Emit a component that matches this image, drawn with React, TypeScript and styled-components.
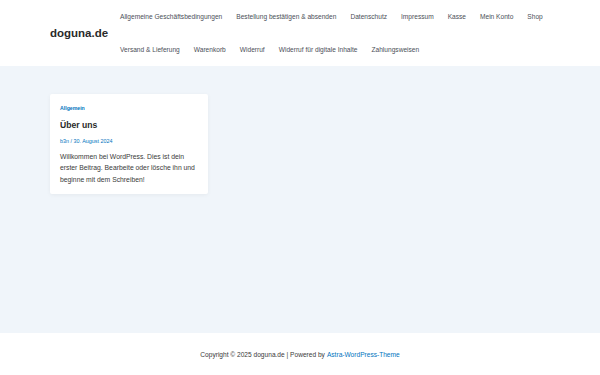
import styled, { createGlobalStyle } from 'styled-components';

const GlobalStyle = createGlobalStyle`
  html, body {
    margin: 0;
    padding: 0;
    background: #ffffff;
    font-family: "Liberation Sans", Arial, sans-serif;
    color: #3a3a3a;
  }
`;

const Page = styled.div`
  display: flex;
  flex-direction: column;
  height: 375px;
`;

const Header = styled.header`
  display: flex;
  align-items: center;
  height: 66px;
  padding-left: 50px;
  background: #ffffff;
`;

const Logo = styled.div`
  width: 70px;
  font-size: 11.5px;
  font-weight: bold;
  color: #2a2a2a;
`;

const Menu = styled.nav`
  display: flex;
  flex-wrap: wrap;
  column-gap: 14px;
  width: 440px;
`;

const MenuItem = styled.a`
  height: 33px;
  line-height: 33px;
  font-size: 6.6px;
  color: #4b4f58;
  text-decoration: none;
  white-space: nowrap;
`;

const Main = styled.main`
  flex: 1;
  background: #f0f5fa;
  padding: 28px 50px 0;
`;

const Card = styled.article`
  width: 140px;
  padding: 10px 8px 9px 10px;
  background: #ffffff;
  border-radius: 2px;
  box-shadow: 0 1px 4px rgba(0, 0, 0, 0.05);
`;

const Category = styled.div`
  font-size: 5.2px;
  font-weight: bold;
  color: #0274be;
  line-height: 8px;
`;

const Title = styled.h2`
  margin: 7px 0 0;
  font-size: 8.6px;
  font-weight: bold;
  color: #2a2a2a;
  line-height: 12px;
`;

const Meta = styled.div`
  margin-top: 6px;
  font-size: 5.4px;
  color: #0274be;
  line-height: 8px;
`;

const Excerpt = styled.p`
  margin: 6px 0 0;
  font-size: 6.8px;
  line-height: 11.3px;
  color: #3a3a3a;
`;

const Footer = styled.footer`
  height: 42px;
  display: flex;
  align-items: center;
  justify-content: center;
  background: #ffffff;
  font-size: 6.6px;
  color: #3a3a3a;
`;

const FooterLink = styled.a`
  color: #0274be;
  text-decoration: none;
  margin-left: 2px;
`;

const links = [
  'Allgemeine Geschäftsbedingungen',
  'Bestellung bestätigen & absenden',
  'Datenschutz',
  'Impressum',
  'Kasse',
  'Mein Konto',
  'Shop',
  'Versand & Lieferung',
  'Warenkorb',
  'Widerruf',
  'Widerruf für digitale Inhalte',
  'Zahlungsweisen',
];

export default function App() {
  return (
    <Page>
      <GlobalStyle />
      <Header>
        <Logo>doguna.de</Logo>
        <Menu>
          {links.map((l) => (
            <MenuItem key={l} href="#">
              {l}
            </MenuItem>
          ))}
        </Menu>
      </Header>
      <Main>
        <Card>
          <Category>Allgemein</Category>
          <Title>Über uns</Title>
          <Meta>b3n / 30. August 2024</Meta>
          <Excerpt>
            Willkommen bei WordPress. Dies ist dein erster Beitrag. Bearbeite oder lösche ihn und
            beginne mit dem Schreiben!
          </Excerpt>
        </Card>
      </Main>
      <Footer>
        Copyright © 2025 doguna.de | Powered by
        <FooterLink href="#">Astra-WordPress-Theme</FooterLink>
      </Footer>
    </Page>
  );
}
